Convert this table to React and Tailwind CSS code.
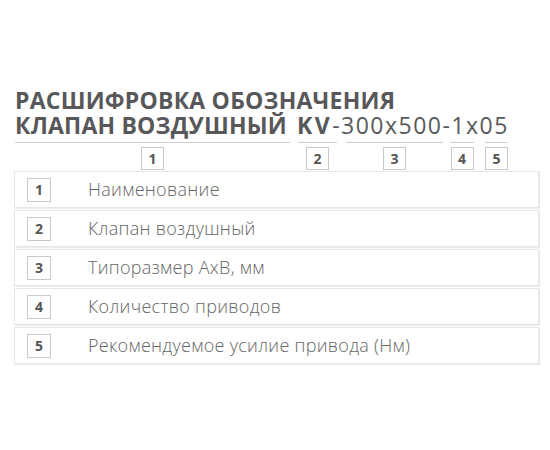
import React from "react";

const rows = [
  ["1", "Наименование"],
  ["2", "Клапан воздушный"],
  ["3", "Типоразмер АхВ, мм"],
  ["4", "Количество приводов"],
  ["5", "Рекомендуемое усилие привода (Нм)"],
];

function NumBox({ n, className = "" }) {
  return (
    <div
      className={
        "flex items-center justify-center border border-[#c9c9c9] bg-white text-[14px] font-bold leading-none text-[#555] " +
        className
      }
    >
      {n}
    </div>
  );
}

function Seg({ ml, w, n }) {
  return (
    <div className="flex flex-col items-center" style={{ marginLeft: ml, width: w }}>
      <div className="h-px w-full bg-[#cfcfcf]" />
      <NumBox n={n} className="mt-[4px] h-[23px] w-[23px]" />
    </div>
  );
}

export default function App() {
  return (
    <div
      className="h-[450px] w-[550px] bg-white pt-[88px]"
      style={{ fontFamily: '"Open Sans", "Noto Sans", sans-serif' }}
    >
      <div className="pl-[15px] text-[23px] font-bold leading-[25px] text-[#58585a]">
        <div className="whitespace-nowrap tracking-[0.22px]">РАСШИФРОВКА ОБОЗНАЧЕНИЯ</div>
        <div className="flex whitespace-nowrap">
          <span className="tracking-[0.2px]">КЛАПАН ВОЗДУШНЫЙ</span>
          <span className="ml-[10px] tracking-[2.5px]">KV</span>
          <span className="font-medium tracking-[1.5px]">-300x500-1x05</span>
        </div>
      </div>
      <div className="mt-[4px] flex">
        <Seg ml={15} w={275} n="1" />
        <Seg ml={8} w={39} n="2" />
        <Seg ml={9} w={97} n="3" />
        <Seg ml={7} w={24} n="4" />
        <Seg ml={11} w={23} n="5" />
      </div>
      <div className="ml-[14px] mt-[1px] flex w-[525px] flex-col gap-[2px]">
        {rows.map(([n, t]) => (
          <div
            key={n}
            className="flex h-[37px] items-center border border-[#e6e6e6] bg-white pl-[12px] shadow-[1px_1px_1px_rgba(0,0,0,0.07)]"
          >
            <NumBox n={n} className="h-[24px] w-[24px]" />
            <span className="ml-[37px] text-[18px] font-light tracking-[0.3px] text-[#666]">{t}</span>
          </div>
        ))}
      </div>
    </div>
  );
}
